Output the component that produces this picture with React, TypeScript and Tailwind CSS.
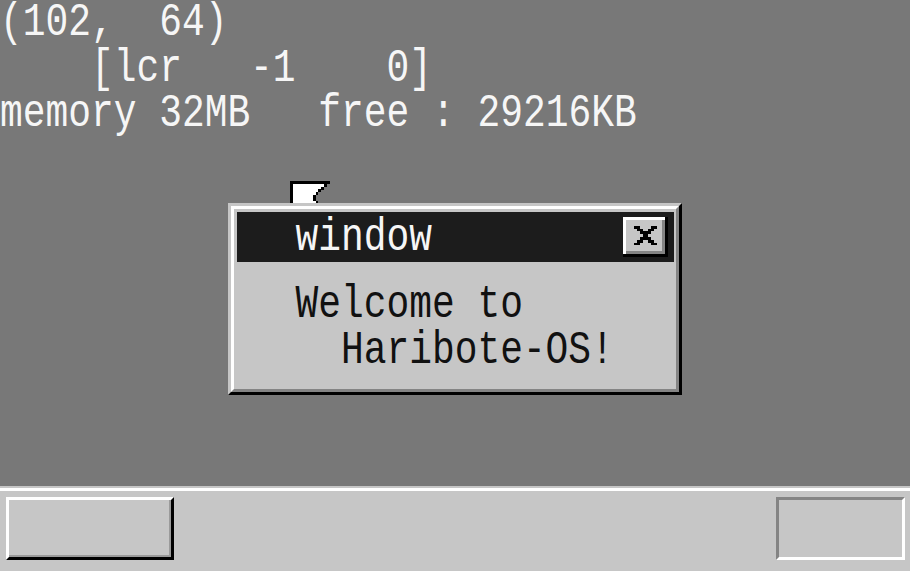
const CURSOR = [
  "**************..",
  "*OOOOOOOOOOO*...",
  "*OOOOOOOOOO*....",
  "*OOOOOOOOO*.....",
  "*OOOOOOOO*......",
  "*OOOOOOO*.......",
  "*OOOOOOO*.......",
  "*OOOOOOOO*......",
  "*OOOO**OOO*.....",
  "*OOO*..*OOO*....",
  "*OO*....*OOO*...",
  "*O*......*OOO*..",
  "**........*OOO*.",
  "*..........*OOO*",
  "............*OO*",
  ".............***",
];

const CLOSE_BTN = [
  "OOOOOOOOOOOOOOO@",
  "OQQQQQQQQQQQQQ$@",
  "OQQQQQQQQQQQQQ$@",
  "OQQQ@@QQQQ@@QQ$@",
  "OQQQQ@@QQ@@QQQ$@",
  "OQQQQQ@@@@QQQQ$@",
  "OQQQQQQ@@QQQQQ$@",
  "OQQQQQ@@@@QQQQ$@",
  "OQQQQ@@QQ@@QQQ$@",
  "OQQQ@@QQQQ@@QQ$@",
  "OQQQQQQQQQQQQQ$@",
  "OQQQQQQQQQQQQQ$@",
  "O$$$$$$$$$$$$$$@",
  "@@@@@@@@@@@@@@@@",
];

const palette: Record<string, string> = {
  "*": "#000000",
  "@": "#000000",
  O: "#ffffff",
  Q: "#c6c6c6",
  $: "#848484",
};

// pixel pattern -> svg rects (the 8-bit sprites from the OS)
function Sprite({ rows, w, h, className }: { rows: string[]; w: number; h: number; className?: string }) {
  return (
    <svg
      width={w}
      height={h}
      viewBox={`0 0 ${rows[0].length} ${rows.length}`}
      shapeRendering="crispEdges"
      className={className}
    >
      {rows.map((row, y) =>
        row.split("").map((c, x) =>
          palette[c] ? <rect key={`${x}-${y}`} x={x} y={y} width={1.02} height={1.02} fill={palette[c]} /> : null
        )
      )}
    </svg>
  );
}

function Line({ text, dark }: { text: string; dark?: boolean }) {
  return (
    <div className="h-[45.7px] flex items-center whitespace-pre">
      <span
        className={`inline-block scale-y-[1.2] text-[37.9px] leading-none font-['Liberation_Mono',monospace] ${
          dark ? "text-[#111111]" : "text-[#f6f6f6]"
        }`}
      >
        {text}
      </span>
    </div>
  );
}

export default function App() {
  return (
    <div className="w-[910px] h-[571px] flex flex-col bg-[#787878] overflow-hidden">
      {/* desktop */}
      <div className="relative flex-1">
        <Line text="(102,  64)" />
        <Line text="    [lcr   -1    0]" />
        <Line text="memory 32MB   free : 29216KB" />

        {/* mouse cursor, sits under the window */}
        <Sprite rows={CURSOR} w={45.5} h={45.3} className="absolute left-[290px] top-[181px]" />

        {/* window */}
        <div className="absolute left-[228px] top-[203px] z-10 w-[454px] h-[192px] border-[3px] border-t-[#c6c6c6] border-l-[#c6c6c6] border-r-black border-b-black">
          <div className="h-full border-[3px] border-t-white border-l-white border-r-[#848484] border-b-[#848484] bg-[#c6c6c6] p-[2.5px]">
            <div className="h-[50.5px] bg-[#1c1c1c] flex items-center pl-[59px] pr-[6px]">
              <div className="pt-[3px]">
                <Line text="window" />
              </div>
              <Sprite rows={CLOSE_BTN} w={45} h={40} className="ml-auto" />
            </div>
            <div className="pl-[59px] pt-[20px]">
              <Line text="Welcome to" dark />
              <Line text="  Haribote-OS!" dark />
            </div>
          </div>
        </div>
      </div>

      {/* taskbar */}
      <div className="h-[85px] bg-[#c6c6c6] border-t-[2px] border-[#c6c6c6]">
        <div className="h-[3px] bg-white" />
        <div className="flex justify-between items-start pt-[6px] px-[6px] pr-[5px]">
          <div className="w-[168px] h-[63px] border-[3px] border-t-white border-l-white border-r-black border-b-black">
            <div className="h-full border-b-[2px] border-r-[2px] border-[#9a9a9a]" />
          </div>
          <div className="w-[129px] h-[63px] border-[3px] border-t-[#848484] border-l-[#848484] border-r-white border-b-white" />
        </div>
      </div>
    </div>
  );
}
